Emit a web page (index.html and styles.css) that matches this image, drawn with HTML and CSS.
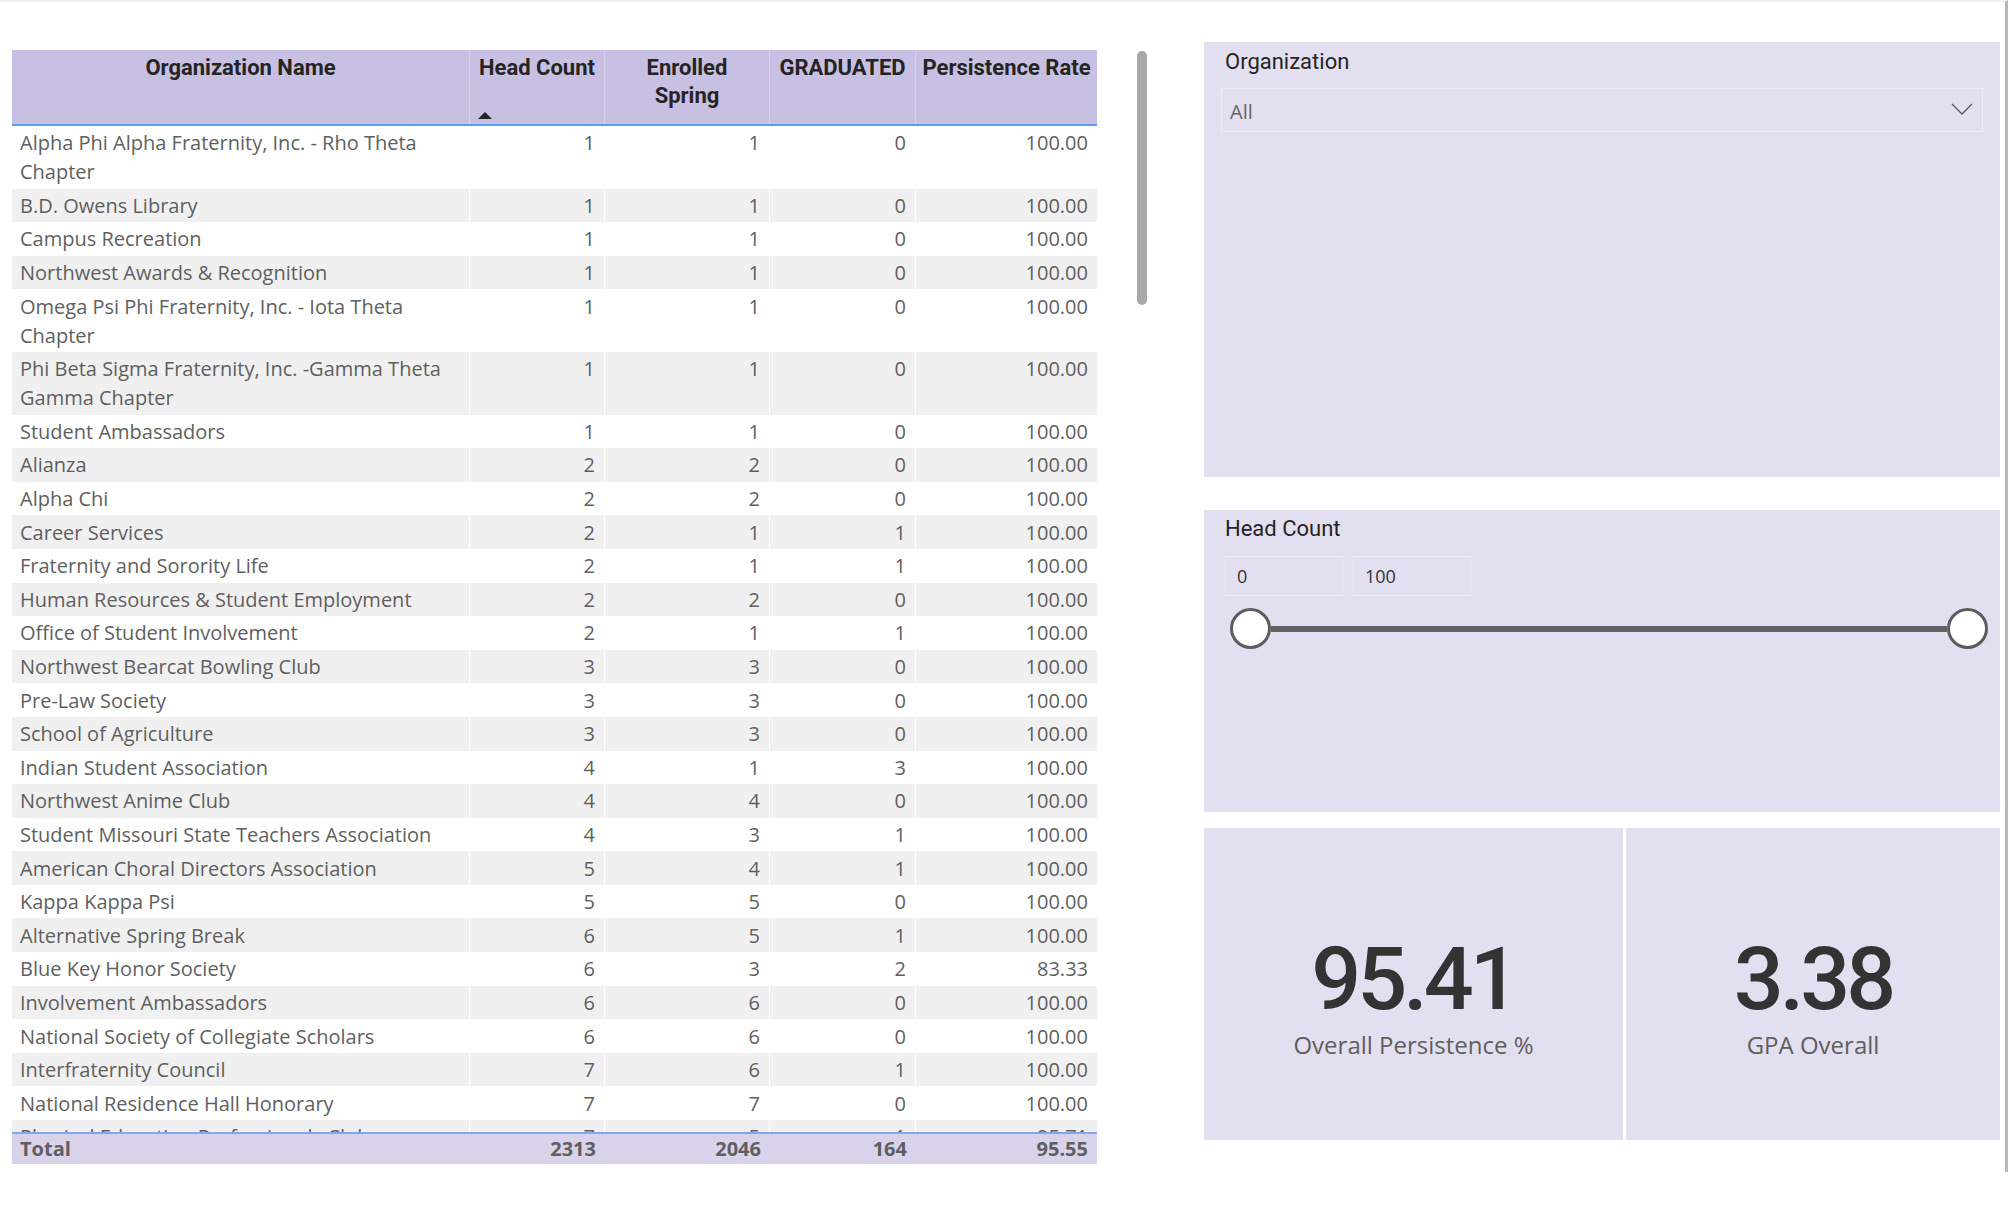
FILE: index.html
```html
<!DOCTYPE html>
<html lang="en">
<head>
<meta charset="utf-8">
<title>Organization Persistence</title>
<link rel="stylesheet" href="styles.css">
</head>
<body>
<div class="page">
  <section class="table-visual">
    <div class="grid-table">
      <div class="row head">
        <div class="hcell">Organization Name</div>
        <div class="hcell sorted">Head Count<span class="sort-arrow"></span></div>
        <div class="hcell">Enrolled<br>Spring</div>
        <div class="hcell">GRADUATED</div>
        <div class="hcell">Persistence Rate</div>
      </div>
      <div class="body">
        <div class="row"><div class="cell name">Alpha Phi Alpha Fraternity, Inc. - Rho Theta Chapter</div><div class="cell">1</div><div class="cell">1</div><div class="cell">0</div><div class="cell">100.00</div></div>
        <div class="row alt"><div class="cell name">B.D. Owens Library</div><div class="cell">1</div><div class="cell">1</div><div class="cell">0</div><div class="cell">100.00</div></div>
        <div class="row"><div class="cell name">Campus Recreation</div><div class="cell">1</div><div class="cell">1</div><div class="cell">0</div><div class="cell">100.00</div></div>
        <div class="row alt"><div class="cell name">Northwest Awards &amp; Recognition</div><div class="cell">1</div><div class="cell">1</div><div class="cell">0</div><div class="cell">100.00</div></div>
        <div class="row"><div class="cell name">Omega Psi Phi Fraternity, Inc. - Iota Theta Chapter</div><div class="cell">1</div><div class="cell">1</div><div class="cell">0</div><div class="cell">100.00</div></div>
        <div class="row alt"><div class="cell name">Phi Beta Sigma Fraternity, Inc. -Gamma Theta Gamma Chapter</div><div class="cell">1</div><div class="cell">1</div><div class="cell">0</div><div class="cell">100.00</div></div>
        <div class="row"><div class="cell name">Student Ambassadors</div><div class="cell">1</div><div class="cell">1</div><div class="cell">0</div><div class="cell">100.00</div></div>
        <div class="row alt"><div class="cell name">Alianza</div><div class="cell">2</div><div class="cell">2</div><div class="cell">0</div><div class="cell">100.00</div></div>
        <div class="row"><div class="cell name">Alpha Chi</div><div class="cell">2</div><div class="cell">2</div><div class="cell">0</div><div class="cell">100.00</div></div>
        <div class="row alt"><div class="cell name">Career Services</div><div class="cell">2</div><div class="cell">1</div><div class="cell">1</div><div class="cell">100.00</div></div>
        <div class="row"><div class="cell name">Fraternity and Sorority Life</div><div class="cell">2</div><div class="cell">1</div><div class="cell">1</div><div class="cell">100.00</div></div>
        <div class="row alt"><div class="cell name">Human Resources &amp; Student Employment</div><div class="cell">2</div><div class="cell">2</div><div class="cell">0</div><div class="cell">100.00</div></div>
        <div class="row"><div class="cell name">Office of Student Involvement</div><div class="cell">2</div><div class="cell">1</div><div class="cell">1</div><div class="cell">100.00</div></div>
        <div class="row alt"><div class="cell name">Northwest Bearcat Bowling Club</div><div class="cell">3</div><div class="cell">3</div><div class="cell">0</div><div class="cell">100.00</div></div>
        <div class="row"><div class="cell name">Pre-Law Society</div><div class="cell">3</div><div class="cell">3</div><div class="cell">0</div><div class="cell">100.00</div></div>
        <div class="row alt"><div class="cell name">School of Agriculture</div><div class="cell">3</div><div class="cell">3</div><div class="cell">0</div><div class="cell">100.00</div></div>
        <div class="row"><div class="cell name">Indian Student Association</div><div class="cell">4</div><div class="cell">1</div><div class="cell">3</div><div class="cell">100.00</div></div>
        <div class="row alt"><div class="cell name">Northwest Anime Club</div><div class="cell">4</div><div class="cell">4</div><div class="cell">0</div><div class="cell">100.00</div></div>
        <div class="row"><div class="cell name">Student Missouri State Teachers Association</div><div class="cell">4</div><div class="cell">3</div><div class="cell">1</div><div class="cell">100.00</div></div>
        <div class="row alt"><div class="cell name">American Choral Directors Association</div><div class="cell">5</div><div class="cell">4</div><div class="cell">1</div><div class="cell">100.00</div></div>
        <div class="row"><div class="cell name">Kappa Kappa Psi</div><div class="cell">5</div><div class="cell">5</div><div class="cell">0</div><div class="cell">100.00</div></div>
        <div class="row alt"><div class="cell name">Alternative Spring Break</div><div class="cell">6</div><div class="cell">5</div><div class="cell">1</div><div class="cell">100.00</div></div>
        <div class="row"><div class="cell name">Blue Key Honor Society</div><div class="cell">6</div><div class="cell">3</div><div class="cell">2</div><div class="cell">83.33</div></div>
        <div class="row alt"><div class="cell name">Involvement Ambassadors</div><div class="cell">6</div><div class="cell">6</div><div class="cell">0</div><div class="cell">100.00</div></div>
        <div class="row"><div class="cell name">National Society of Collegiate Scholars</div><div class="cell">6</div><div class="cell">6</div><div class="cell">0</div><div class="cell">100.00</div></div>
        <div class="row alt"><div class="cell name">Interfraternity Council</div><div class="cell">7</div><div class="cell">6</div><div class="cell">1</div><div class="cell">100.00</div></div>
        <div class="row"><div class="cell name">National Residence Hall Honorary</div><div class="cell">7</div><div class="cell">7</div><div class="cell">0</div><div class="cell">100.00</div></div>
        <div class="row alt"><div class="cell name">Physical Education Professionals Club</div><div class="cell">7</div><div class="cell">5</div><div class="cell">1</div><div class="cell">95.71</div></div>
      </div>
      <div class="row total">
        <div class="cell name">Total</div><div class="cell">2313</div><div class="cell">2046</div><div class="cell">164</div><div class="cell">95.55</div>
      </div>
    </div>
    <div class="scrollbar"></div>
  </section>

  <aside class="side">
    <div class="panel slicer-org">
      <div class="slicer-title">Organization</div>
      <div class="dropdown">
        <span class="dropdown-value">All</span>
        <svg class="chevron" width="22" height="12" viewBox="0 0 22 12"><path d="M1 1 L11 11 L21 1" fill="none" stroke="#5a5a5a" stroke-width="1.3"/></svg>
      </div>
    </div>

    <div class="panel slicer-range">
      <div class="slicer-title">Head Count</div>
      <div class="range-inputs">
        <div class="range-box">0</div>
        <div class="range-box">100</div>
      </div>
      <div class="slider">
        <span class="handle"></span>
        <span class="track"></span>
        <span class="handle"></span>
      </div>
    </div>

    <div class="cards">
      <div class="card">
        <div class="card-value">95.41</div>
        <div class="card-label">Overall Persistence %</div>
      </div>
      <div class="card">
        <div class="card-value">3.38</div>
        <div class="card-label">GPA Overall</div>
      </div>
    </div>
  </aside>
</div>
</body>
</html>
```

FILE: styles.css
```css
* { box-sizing: border-box; }

body {
  margin: 0;
  background: #ffffff;
  font-family: "Open Sans", "Noto Sans", sans-serif;
  color: #252423;
}

.page {
  width: 2008px;
  height: 1172px;
  border-top: 2px solid #f1f1f1;
  border-right: 3px solid #bab7b7;
  display: flex;
  align-items: flex-start;
}

/* ---------- table ---------- */
.table-visual {
  margin: 48px 0 0 12px;
  display: flex;
  align-items: flex-start;
}

.grid-table {
  width: 1085px;
}

.row {
  display: grid;
  grid-template-columns: 458px 135px 165px 146px 181px;
}

.head {
  background: #c7c0e3;
  height: 76px;
  border-bottom: 2px solid #5e9af4;
}

.hcell {
  font-family: "Roboto", "Liberation Sans", sans-serif;
  font-weight: 700;
  font-size: 22px;
  line-height: 28px;
  color: #252423;
  text-align: center;
  padding: 4px 3px 0;
  border-right: 1px solid #d6d0ec;
  display: flex;
  flex-direction: column;
  align-items: center;
}
.hcell:last-child { border-right: none; }

.sort-arrow {
  align-self: flex-start;
  margin-top: auto;
  margin-bottom: 5px;
  margin-left: 5px;
  width: 0;
  height: 0;
  border-left: 7px solid transparent;
  border-right: 7px solid transparent;
  border-bottom: 7px solid #252423;
}

.body {
  height: 1006px;
  overflow: hidden;
}

.cell {
  font-size: 20px;
  line-height: 29px;
  padding: 2.3px 9px;
  color: #5f5f5f;
  text-align: right;
  border-right: 1px solid #ffffff;
}
.cell:last-child { border-right: none; }
.cell.name {
  text-align: left;
  padding-left: 8px;
  padding-right: 6px;
}

.row.alt { background: #f0f0f0; }

.total {
  background: #d8d3eb;
  border-top: 2px solid #7ea8f0;
  height: 32px;
}
.total .cell {
  font-weight: 700;
  color: #5f5f5f;
  line-height: 28px;
  padding-top: 1px;
  padding-bottom: 0;
  border-right: none;
}

.scrollbar {
  margin: 1px 0 0 40px;
  width: 10px;
  height: 254px;
  border-radius: 5px;
  background: #a8a8a8;
}

/* ---------- side panels ---------- */
.side {
  margin: 40px 0 0 57px;
  width: 796px;
  display: flex;
  flex-direction: column;
}

.panel {
  background: #e2dff0;
}

.slicer-title {
  font-family: "Roboto", "Liberation Sans", sans-serif;
  font-size: 22px;
  font-weight: 400;
  color: #252423;
  line-height: 26px;
}

.slicer-org {
  height: 435px;
  padding: 7px 17px 0;
}
.slicer-org .slicer-title { padding-left: 4px; }

.dropdown {
  margin-top: 13px;
  height: 44px;
  border: 1px solid #eeebf6;
  display: flex;
  align-items: center;
  justify-content: space-between;
  padding: 0 9px 0 8px;
}
.dropdown-value {
  font-size: 20px;
  color: #666666;
  margin-top: 2px;
}
.chevron { margin-top: -2px; }

.slicer-range {
  margin-top: 33px;
  height: 302px;
  padding: 6px 12px 0 21px;
}

.range-inputs {
  margin-top: 14px;
  display: flex;
  gap: 10px;
}
.range-box {
  width: 118px;
  height: 40px;
  border: 1px solid #ebe8f4;
  font-size: 18px;
  line-height: 38px;
  padding-left: 11px;
  color: #333333;
}

.slider {
  margin: 12px 0 0 5px;
  display: flex;
  align-items: center;
}
.handle {
  width: 41px;
  height: 41px;
  border-radius: 50%;
  border: 3px solid #5c5c5c;
  background: #ffffff;
  flex: none;
}
.track {
  flex: 1;
  height: 6px;
  background: #616161;
}

.cards {
  margin-top: 16px;
  height: 312px;
  display: flex;
  gap: 3px;
}
.card {
  background: #e2dff0;
  display: flex;
  flex-direction: column;
  align-items: center;
  justify-content: center;
  padding-top: 28px;
}
.card:first-child { width: 419px; }
.card:last-child { flex: 1; }

.card-value {
  font-family: "Roboto", "Liberation Sans", sans-serif;
  font-size: 88px;
  font-weight: 500;
  letter-spacing: -4px;
  line-height: 90px;
  color: #333333;
}
.card-label {
  font-size: 24px;
  line-height: 34px;
  margin-top: 4px;
  color: #605e5c;
}
```
